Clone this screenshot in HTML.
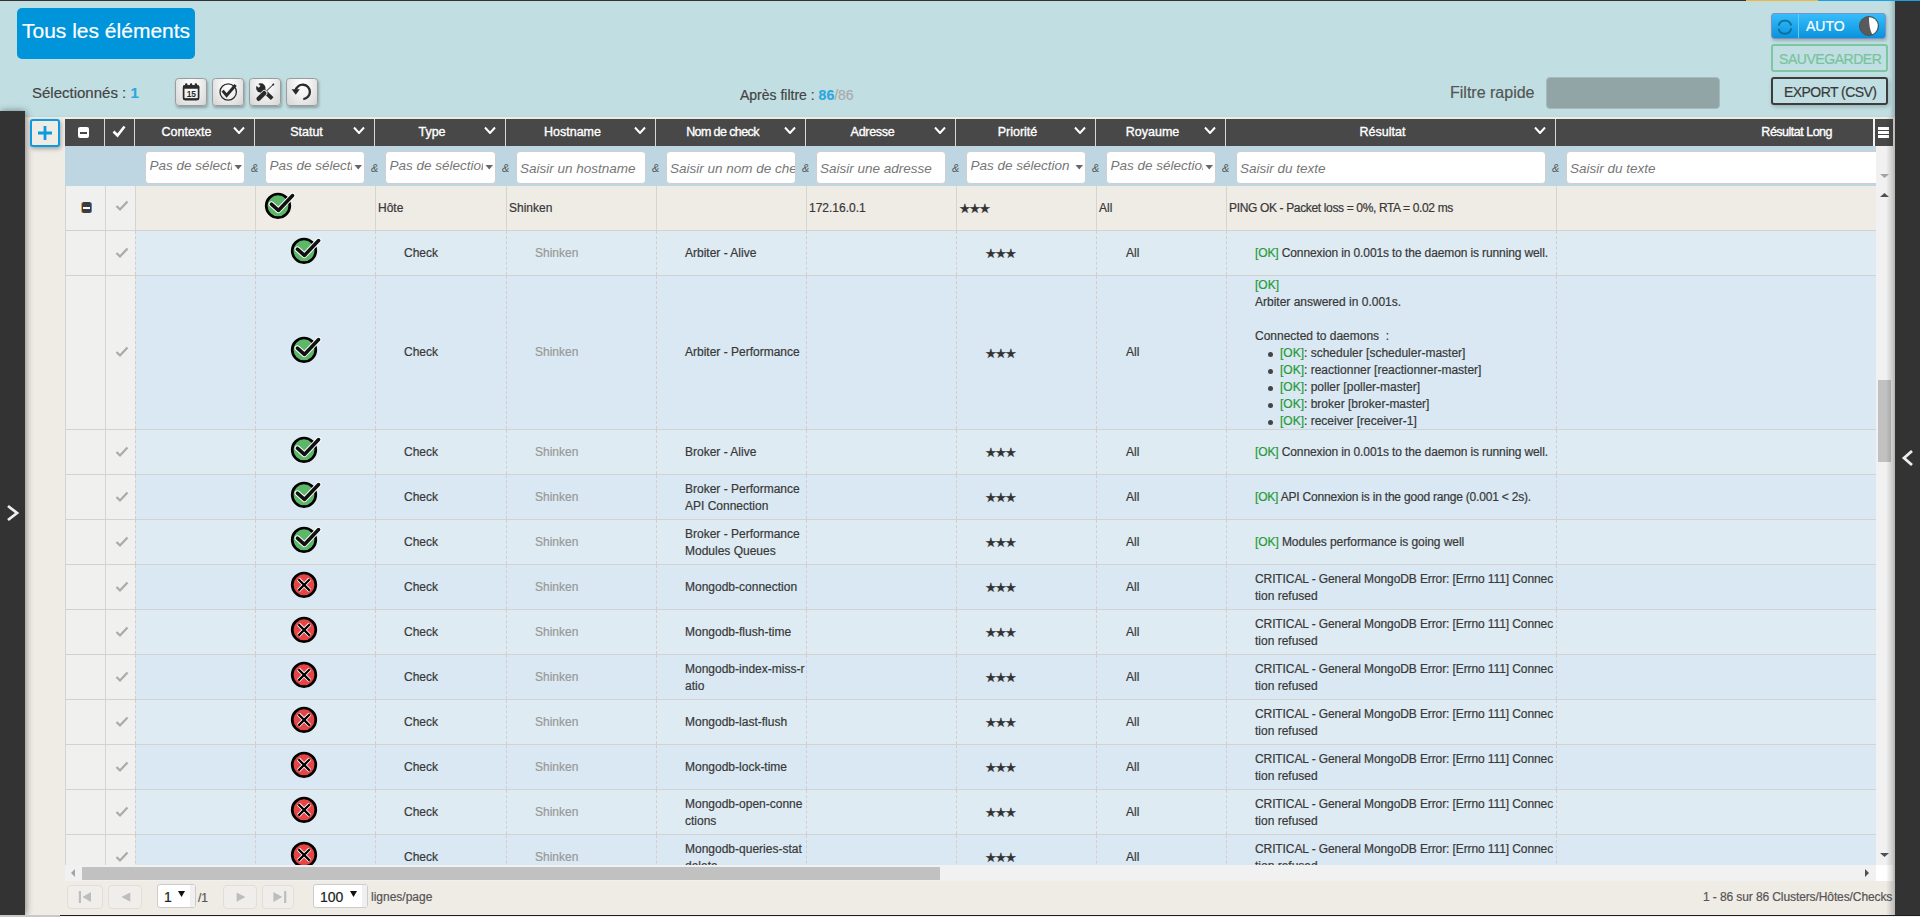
<!DOCTYPE html><html><head><meta charset='utf-8'><style>
*{box-sizing:border-box}
html,body{margin:0;padding:0}
body{width:1920px;height:917px;overflow:hidden;position:relative;background:#efebe5;font-family:"Liberation Sans", sans-serif;color:#444}
.abs{position:absolute}
.t{position:absolute;white-space:nowrap;line-height:1;-webkit-text-stroke:0.2px currentColor}
.hdr{position:absolute;top:119px;height:27px;background:#484848}
.hsep{position:absolute;top:119px;height:27px;width:1px;background:#dcd9d2}
.htxt{position:absolute;top:125.5px;color:#fff;font-weight:normal;-webkit-text-stroke:0.35px #fff;font-size:12.5px;white-space:nowrap;line-height:1}
.chev{position:absolute;top:126px;width:12px;height:8px}
.fin{position:absolute;top:151px;height:33px;background:#fff;border:1px solid #cfcfcf;border-radius:4px;overflow:hidden}
.fph{position:absolute;left:3px;font-style:italic;color:#777;font-size:13.5px;white-space:nowrap;line-height:1}
.amp{position:absolute;top:162.5px;font-style:italic;color:#555;font-size:11px;line-height:1}
.row{position:absolute;left:65px;width:1811px;border-bottom:1px solid #d2d2d2}
.c01{position:absolute;left:0;top:0;bottom:0;width:70px;background:#f0f0ee}
.vl{position:absolute;top:0;bottom:0;width:1px;background:#d4d4d4}
.vd{position:absolute;top:0;bottom:0;width:0;border-left:1px dashed #d6cccc}
.cell{position:absolute;font-size:12px;color:#383838;-webkit-text-stroke:0.2px currentColor;line-height:17px;white-space:nowrap}
.ok{color:#259a35}
.gray{color:#999}
</style></head><body><div class='abs' style='left:0;top:0;width:1895px;height:117px;background:#c1dfe2;box-shadow:inset -5px 0 5px -3px rgba(0,0,0,0.25)'></div><div class='abs' style='left:0;top:0;width:1746px;height:1px;background:#333'></div><div class='abs' style='left:1746px;top:0;width:72px;height:1px;background:#f0b840'></div><div class='abs' style='left:1818px;top:0;width:102px;height:1px;background:#1ba1e2'></div><div class='abs' style='left:1895px;top:1px;width:25px;height:914px;background:#333'></div><div class='abs' style='left:0;top:111px;width:25px;height:804px;background:#333;box-shadow:1px 0 7px rgba(0,0,0,0.45)'></div><svg class='abs' style='left:5px;top:503px' width='16' height='20'><path d='M3 3 L12 10 L3 17' fill='none' stroke='#eee' stroke-width='2.8'/></svg><svg class='abs' style='left:1900px;top:448px' width='16' height='20'><path d='M12 3 L4 10 L12 17' fill='none' stroke='#eee' stroke-width='2.8'/></svg><div class='abs' style='left:17px;top:8px;width:178px;height:51px;background:#0095da;border-radius:5px'></div><div class='t' style='left:22px;top:20px;font-size:21px;color:#fff'>Tous les éléments</div><div class='t' style='left:32px;top:85px;font-size:15px;color:#444'>Sélectionnés : <span style='color:#2ea6e0;font-weight:bold'>1</span></div><div class='abs' style='left:175px;top:78px;width:32px;height:28px;border:1px solid #9c9c9c;border-radius:3.5px;background:radial-gradient(ellipse at 50% 20%,#ffffff 0%,#f2f2f2 40%,#d4d4d4 100%);box-shadow:1px 2px 3px rgba(0,0,0,0.28)'></div><div class='abs' style='left:212px;top:78px;width:32px;height:28px;border:1px solid #9c9c9c;border-radius:3.5px;background:radial-gradient(ellipse at 50% 20%,#ffffff 0%,#f2f2f2 40%,#d4d4d4 100%);box-shadow:1px 2px 3px rgba(0,0,0,0.28)'></div><div class='abs' style='left:249px;top:78px;width:32px;height:28px;border:1px solid #9c9c9c;border-radius:3.5px;background:radial-gradient(ellipse at 50% 20%,#ffffff 0%,#f2f2f2 40%,#d4d4d4 100%);box-shadow:1px 2px 3px rgba(0,0,0,0.28)'></div><div class='abs' style='left:286px;top:78px;width:32px;height:28px;border:1px solid #9c9c9c;border-radius:3.5px;background:radial-gradient(ellipse at 50% 20%,#ffffff 0%,#f2f2f2 40%,#d4d4d4 100%);box-shadow:1px 2px 3px rgba(0,0,0,0.28)'></div><svg class='abs' style='left:175px;top:78px' width='32' height='28'>
<rect x='8.6' y='8' width='15' height='13.6' rx='1.6' fill='none' stroke='#2a2a2a' stroke-width='1.7'/>
<rect x='8' y='7.2' width='16.2' height='3.6' rx='1' fill='#2a2a2a'/>
<circle cx='11.3' cy='6.4' r='1.2' fill='#2a2a2a'/><circle cx='16.1' cy='6.4' r='1.2' fill='#2a2a2a'/><circle cx='20.9' cy='6.4' r='1.2' fill='#2a2a2a'/>
<rect x='8.6' y='20.2' width='15' height='1.8' fill='#2a2a2a'/>
<text x='16.2' y='19.2' font-size='8.4' font-weight='bold' text-anchor='middle' fill='#2a2a2a' font-family='Liberation Sans' letter-spacing='-0.3'>15</text></svg><svg class='abs' style='left:212px;top:78px' width='32' height='28'>
<circle cx='16.2' cy='14' r='8.2' fill='none' stroke='#2a2a2a' stroke-width='1.3'/>
<path d='M10.6 12.6 L14.6 17.4 L23.6 6.9' fill='none' stroke='#2a2a2a' stroke-width='3'/></svg><svg class='abs' style='left:249px;top:78px' width='32' height='28'>
<defs><mask id='wm'><rect width='32' height='28' fill='#fff'/><path d='M11.46 8.02 L7.57 4.13 L5.73 5.97 L9.62 9.86 Z' fill='#000'/></mask></defs>
<path d='M12 10 L23.2 20.6' stroke='#2a2a2a' stroke-width='4' stroke-linecap='butt'/>
<circle cx='11.8' cy='10' r='4.7' fill='#2a2a2a' mask='url(#wm)'/>
<path d='M24.4 6.4 L15.6 14.8 L9.4 21' stroke='#e4e4e4' stroke-width='1.6' fill='none'/>
<path d='M24.4 6.4 L15.8 14.6' stroke='#2a2a2a' stroke-width='1' fill='none'/>
<path d='M15.4 15 L9.6 20.8' stroke='#e4e4e4' stroke-width='6' stroke-linecap='round'/>
<path d='M15.2 15.2 L9.6 20.8' stroke='#2a2a2a' stroke-width='4.4' stroke-linecap='round'/>
<circle cx='24.3' cy='6.5' r='1' fill='#2a2a2a'/></svg><svg class='abs' style='left:286px;top:78px' width='32' height='28'>
<path d='M9.6 12.6 A7.2 7.2 0 1 1 17.3 21.1' fill='none' stroke='#2a2a2a' stroke-width='2.3'/>
<path d='M5.6 11.2 L13.8 11.2 L9.8 16.8 Z' fill='#2a2a2a'/></svg><div class='t' style='left:740px;top:88px;font-size:14px;color:#444'>Après filtre : <span style='color:#2ea6e0;font-weight:bold'>86</span><span style='color:#aaa'>/86</span></div><div class='t' style='left:1450px;top:85px;font-size:16px;color:#555'>Filtre rapide</div><div class='abs' style='left:1546px;top:77px;width:174px;height:32px;background:#91a4a6;border:1px solid #a9b8ba;border-radius:4px'></div><div class='abs' style='left:1771px;top:13px;width:115px;height:26px;border:1px solid #7f8fc8;border-radius:3px;background:linear-gradient(#36bdfc,#0993dc);box-shadow:1px 2px 3px rgba(0,0,0,0.2)'></div><div class='abs' style='left:1798px;top:14px;width:1px;height:24px;background:#62cdfb'></div><svg class='abs' style='left:1775px;top:17px' width='20' height='20'>
<path d='M3.6 8.6 A6.5 6.5 0 0 1 16.2 8.4' fill='none' stroke='#0f6f98' stroke-width='1.9'/>
<path d='M16.2 11.4 A6.5 6.5 0 0 1 3.5 11.8' fill='none' stroke='#0f6f98' stroke-width='1.9'/></svg><div class='t' style='left:1806px;top:19px;font-size:14px;color:#fff'>AUTO</div><svg class='abs' style='left:1858px;top:15px' width='22' height='22'>
<circle cx='11' cy='11' r='9.6' fill='#5a5a5a' stroke='#4a4a4a' stroke-width='0.8'/>
<path d='M11 2.2 A8.8 8.8 0 0 1 14.2 19.2 Q10.8 13 11 2.2 Z' fill='#fff'/></svg><div class='abs' style='left:1771px;top:44px;width:117px;height:28px;border:2px solid #7cc6a2;border-radius:3px'></div><div class='t' style='left:1779px;top:52px;font-size:14px;letter-spacing:-0.45px;color:#76c39d'>SAUVEGARDER</div><div class='abs' style='left:1771px;top:77px;width:117px;height:28px;border:2px solid #3d3d3d;border-radius:3px;box-shadow:1px 2px 4px rgba(0,0,0,0.2)'></div><div class='t' style='left:1784px;top:85px;font-size:14px;letter-spacing:-0.55px;color:#3a3a3a'>EXPORT (CSV)</div><div class='abs' style='left:30px;top:119px;width:30px;height:28px;border:2px solid #0a9be0;border-radius:3px;background:#efebe5;box-shadow:1px 2px 4px rgba(0,0,0,0.3)'></div><svg class='abs' style='left:30px;top:119px' width='30' height='28'><path d='M15 7v14M8 14h14' stroke='#0a9be0' stroke-width='2.8'/></svg><div class='hdr' style='left:65px;width:1808px'></div><div class='abs' style='left:1873px;top:119px;width:2px;height:27px;background:#f4f4f4'></div><div class='abs' style='left:1875px;top:119px;width:18px;height:27px;background:#484848'></div><div class='hsep' style='left:104px'></div><div class='hsep' style='left:134px'></div><div class='hsep' style='left:254px'></div><div class='hsep' style='left:374px'></div><div class='hsep' style='left:505px'></div><div class='hsep' style='left:655px'></div><div class='hsep' style='left:805px'></div><div class='hsep' style='left:955px'></div><div class='hsep' style='left:1095px'></div><div class='hsep' style='left:1225px'></div><div class='hsep' style='left:1555px'></div><div class='abs' style='left:78px;top:127px;width:11px;height:11px;background:#fff;border-radius:2px'></div><div class='abs' style='left:80px;top:132px;width:7px;height:1.5px;background:#484848'></div><svg class='abs' style='left:110px;top:123px' width='18' height='16'><path d='M3.5 8.5 L7.5 12.5 L14.5 3.5' fill='none' stroke='#fff' stroke-width='2.6'/></svg><div class='htxt' style='left:135px;width:103px;text-align:center;letter-spacing:0px'>Contexte</div><svg class='chev' style='left:233px' width='12' height='9'><path d='M1 1.5 L6 7 L11 1.5' fill='none' stroke='#fff' stroke-width='2'/></svg><div class='htxt' style='left:255px;width:103px;text-align:center;letter-spacing:0px'>Statut</div><svg class='chev' style='left:353px' width='12' height='9'><path d='M1 1.5 L6 7 L11 1.5' fill='none' stroke='#fff' stroke-width='2'/></svg><div class='htxt' style='left:375px;width:114px;text-align:center;letter-spacing:0px'>Type</div><svg class='chev' style='left:484px' width='12' height='9'><path d='M1 1.5 L6 7 L11 1.5' fill='none' stroke='#fff' stroke-width='2'/></svg><div class='htxt' style='left:506px;width:133px;text-align:center;letter-spacing:0px'>Hostname</div><svg class='chev' style='left:634px' width='12' height='9'><path d='M1 1.5 L6 7 L11 1.5' fill='none' stroke='#fff' stroke-width='2'/></svg><div class='htxt' style='left:656px;width:133px;text-align:center;letter-spacing:-0.6px'>Nom de check</div><svg class='chev' style='left:784px' width='12' height='9'><path d='M1 1.5 L6 7 L11 1.5' fill='none' stroke='#fff' stroke-width='2'/></svg><div class='htxt' style='left:806px;width:133px;text-align:center;letter-spacing:-0.3px'>Adresse</div><svg class='chev' style='left:934px' width='12' height='9'><path d='M1 1.5 L6 7 L11 1.5' fill='none' stroke='#fff' stroke-width='2'/></svg><div class='htxt' style='left:956px;width:123px;text-align:center;letter-spacing:0px'>Priorité</div><svg class='chev' style='left:1074px' width='12' height='9'><path d='M1 1.5 L6 7 L11 1.5' fill='none' stroke='#fff' stroke-width='2'/></svg><div class='htxt' style='left:1096px;width:113px;text-align:center;letter-spacing:0px'>Royaume</div><svg class='chev' style='left:1204px' width='12' height='9'><path d='M1 1.5 L6 7 L11 1.5' fill='none' stroke='#fff' stroke-width='2'/></svg><div class='htxt' style='left:1226px;width:313px;text-align:center;letter-spacing:0px'>Résultat</div><svg class='chev' style='left:1534px' width='12' height='9'><path d='M1 1.5 L6 7 L11 1.5' fill='none' stroke='#fff' stroke-width='2'/></svg><div class='htxt' style='left:1556px;width:317px;text-align:right;padding-right:41px;letter-spacing:-0.5px'>Résultat Long</div><div class='abs' style='left:1878px;top:127px;width:11px;height:3px;background:#fff'></div><div class='abs' style='left:1878px;top:131px;width:11px;height:3px;background:#fff'></div><div class='abs' style='left:1878px;top:135px;width:11px;height:3px;background:#fff'></div><div class='abs' style='left:65px;top:146px;width:1811px;height:40px;background:#bdd6e2'></div><div class='abs' style='left:1876px;top:146px;width:17px;height:719px;background:#f1f1f1'></div><div class='abs' style='left:1876px;top:865px;width:17px;height:16px;background:#fff'></div><div class='abs' style='left:0;top:0;width:1876px;height:200px;overflow:hidden'><div class='fin' style='left:145px;width:100px'><div class='fph' style='top:6.5px;left:3.5px;width:82px;overflow:hidden'>Pas de sélecti</div><svg class='abs' style='right:1px;top:12.5px' width='9' height='6'><path d='M0.5 0h7.5l-3.75 4.6z' fill='#666'/></svg></div><div class='amp' style='left:251px'>&amp;</div><div class='fin' style='left:265px;width:100px'><div class='fph' style='top:6.5px;left:3.5px;width:82px;overflow:hidden'>Pas de sélecti</div><svg class='abs' style='right:1px;top:12.5px' width='9' height='6'><path d='M0.5 0h7.5l-3.75 4.6z' fill='#666'/></svg></div><div class='amp' style='left:371px'>&amp;</div><div class='fin' style='left:385px;width:111px'><div class='fph' style='top:6.5px;left:3.5px;width:93px;overflow:hidden'>Pas de sélection</div><svg class='abs' style='right:1px;top:12.5px' width='9' height='6'><path d='M0.5 0h7.5l-3.75 4.6z' fill='#666'/></svg></div><div class='amp' style='left:502px'>&amp;</div><div class='fin' style='left:516px;width:130px'><div class='fph' style='top:10px'>Saisir un hostname</div></div><div class='amp' style='left:652px'>&amp;</div><div class='fin' style='left:666px;width:130px'><div class='fph' style='top:10px'>Saisir un nom de check</div></div><div class='amp' style='left:802px'>&amp;</div><div class='fin' style='left:816px;width:130px'><div class='fph' style='top:10px'>Saisir une adresse</div></div><div class='amp' style='left:952px'>&amp;</div><div class='fin' style='left:966px;width:120px'><div class='fph' style='top:6.5px;left:3.5px;width:102px;overflow:hidden'>Pas de sélection</div><svg class='abs' style='right:1px;top:12.5px' width='9' height='6'><path d='M0.5 0h7.5l-3.75 4.6z' fill='#666'/></svg></div><div class='amp' style='left:1092px'>&amp;</div><div class='fin' style='left:1106px;width:110px'><div class='fph' style='top:6.5px;left:3.5px;width:92px;overflow:hidden'>Pas de sélection</div><svg class='abs' style='right:1px;top:12.5px' width='9' height='6'><path d='M0.5 0h7.5l-3.75 4.6z' fill='#666'/></svg></div><div class='amp' style='left:1222px'>&amp;</div><div class='fin' style='left:1236px;width:310px'><div class='fph' style='top:10px'>Saisir du texte</div></div><div class='amp' style='left:1552px'>&amp;</div><div class='fin' style='left:1566px;width:334px'><div class='fph' style='top:10px'>Saisir du texte</div></div></div><svg class='abs' style='left:1879px;top:174px' width='12' height='6'><path d='M1 0h9l-4.5 4z' fill='#a3a3a3'/></svg><svg class='abs' style='left:1879px;top:192px' width='12' height='6'><path d='M1 5h9l-4.5 -4z' fill='#505050'/></svg><svg class='abs' style='left:1879px;top:853px' width='12' height='6'><path d='M1 0h9l-4.5 4z' fill='#505050'/></svg><div class='abs' style='left:1878px;top:380px;width:13px;height:82px;background:#c1c1c1'></div><div class='row' style='top:186px;height:45px;background:#efebe5'><div class='c01'></div><div class='vl' style='left:40px'></div><div class='vl' style='left:70px'></div><div class='vl' style='left:190px'></div><div class='vl' style='left:310px'></div><div class='vl' style='left:441px'></div><div class='vl' style='left:591px'></div><div class='vl' style='left:741px'></div><div class='vl' style='left:891px'></div><div class='vl' style='left:1031px'></div><div class='vl' style='left:1161px'></div><div class='vl' style='left:1491px'></div><div class='vl' style='left:0'></div></div><div class='abs' style='left:81px;top:202px;width:11px;height:11px;background:#3c3c3c;border-radius:2.5px;border-left:1px solid #e0a040;border-right:1px solid #3a8ad0'></div><div class='abs' style='left:83px;top:206.5px;width:7px;height:2px;background:#fff'></div><svg class='abs' style='left:115px;top:199px' width='14' height='13'><path d='M1.5 7 L5 10.5 L12.5 2.5' fill='none' stroke='#aaa' stroke-width='2.2'/></svg><svg class='abs' style='left:263px;top:191px' width='34' height='32'><circle cx='15' cy='14.8' r='11.8' fill='#5cb868' stroke='#000' stroke-width='2.7'/><path d='M8.4 13.2 L15.4 19.4 L29.6 4.6' fill='none' stroke='#fff' stroke-width='5.6' stroke-linecap='round' stroke-linejoin='round'/><path d='M8.4 13.2 L15.4 19.4 L29.6 4.6' fill='none' stroke='#111' stroke-width='3.6' stroke-linecap='round' stroke-linejoin='round'/></svg><div class='cell ' style='left:378px;top:199.5px;'>Hôte</div><div class='cell ' style='left:509px;top:199.5px;'>Shinken</div><div class='cell ' style='left:809px;top:199.5px;'>172.16.0.1</div><div class='t' style='left:959px;top:203px;font-size:12.5px;color:#333;letter-spacing:-2px'>★★★</div><div class='cell ' style='left:1099px;top:199.5px;'>All</div><div class='cell ' style='left:1229px;top:199.5px;letter-spacing:-0.35px'>PING OK - Packet loss = 0%, RTA = 0.02 ms</div><div class='abs' style='left:0;top:0;width:1920px;height:865px;overflow:hidden'><div class='row' style='top:231px;height:45px;background:#dfebf3'><div class='c01'></div><div class='vl' style='left:0'></div><div class='vl' style='left:40px'></div><div class='vd' style='left:70px'></div><div class='vd' style='left:190px'></div><div class='vd' style='left:310px'></div><div class='vd' style='left:441px'></div><div class='vd' style='left:591px'></div><div class='vd' style='left:741px'></div><div class='vd' style='left:891px'></div><div class='vd' style='left:1031px'></div><div class='vd' style='left:1161px'></div><div class='vd' style='left:1491px'></div></div><svg class='abs' style='left:115px;top:246px' width='14' height='13'><path d='M1.5 7 L5 10.5 L12.5 2.5' fill='none' stroke='#aaa' stroke-width='2.2'/></svg><svg class='abs' style='left:289px;top:236px' width='34' height='32'><circle cx='15' cy='14.8' r='11.8' fill='#5cb868' stroke='#000' stroke-width='2.7'/><path d='M8.4 13.2 L15.4 19.4 L29.6 4.6' fill='none' stroke='#fff' stroke-width='5.6' stroke-linecap='round' stroke-linejoin='round'/><path d='M8.4 13.2 L15.4 19.4 L29.6 4.6' fill='none' stroke='#111' stroke-width='3.6' stroke-linecap='round' stroke-linejoin='round'/></svg><div class='cell ' style='left:404px;top:244.5px;'>Check</div><div class='cell gray' style='left:535px;top:244.5px;'>Shinken</div><div class='cell' style='left:685px;top:244.5px'>Arbiter - Alive</div><div class='t' style='left:985px;top:248px;font-size:12.5px;color:#333;letter-spacing:-2px'>★★★</div><div class='cell ' style='left:1126px;top:244.5px;'>All</div><div class='cell' style='left:1255px;top:244.5px'><div style='position:relative;height:17px'><span style='letter-spacing:-0.12px'><span class='ok'>[OK]</span> Connexion in 0.001s to the daemon is running well.</span></div></div><div class='row' style='top:276px;height:154px;background:#d9e8f2'><div class='c01'></div><div class='vl' style='left:0'></div><div class='vl' style='left:40px'></div><div class='vd' style='left:70px'></div><div class='vd' style='left:190px'></div><div class='vd' style='left:310px'></div><div class='vd' style='left:441px'></div><div class='vd' style='left:591px'></div><div class='vd' style='left:741px'></div><div class='vd' style='left:891px'></div><div class='vd' style='left:1031px'></div><div class='vd' style='left:1161px'></div><div class='vd' style='left:1491px'></div></div><svg class='abs' style='left:115px;top:345px' width='14' height='13'><path d='M1.5 7 L5 10.5 L12.5 2.5' fill='none' stroke='#aaa' stroke-width='2.2'/></svg><svg class='abs' style='left:289px;top:335px' width='34' height='32'><circle cx='15' cy='14.8' r='11.8' fill='#5cb868' stroke='#000' stroke-width='2.7'/><path d='M8.4 13.2 L15.4 19.4 L29.6 4.6' fill='none' stroke='#fff' stroke-width='5.6' stroke-linecap='round' stroke-linejoin='round'/><path d='M8.4 13.2 L15.4 19.4 L29.6 4.6' fill='none' stroke='#111' stroke-width='3.6' stroke-linecap='round' stroke-linejoin='round'/></svg><div class='cell ' style='left:404px;top:344.0px;'>Check</div><div class='cell gray' style='left:535px;top:344.0px;'>Shinken</div><div class='cell' style='left:685px;top:344.0px'>Arbiter - Performance</div><div class='t' style='left:985px;top:348px;font-size:12.5px;color:#333;letter-spacing:-2px'>★★★</div><div class='cell ' style='left:1126px;top:344.0px;'>All</div><div class='cell' style='left:1255px;top:277.0px'><div style='position:relative;height:17px'><span class='ok'>[OK]</span></div><div style='position:relative;height:17px'>Arbiter answered in 0.001s.</div><div style='position:relative;height:17px'>&nbsp;</div><div style='position:relative;height:17px'>Connected to daemons&nbsp; :</div><div style='position:relative;height:17px'><span style='position:absolute;left:13px;top:6.5px;width:5px;height:5px;border-radius:50%;background:#444'></span><span style='position:absolute;left:25px'><span class='ok'>[OK]</span>: scheduler [scheduler-master]</span></div><div style='position:relative;height:17px'><span style='position:absolute;left:13px;top:6.5px;width:5px;height:5px;border-radius:50%;background:#444'></span><span style='position:absolute;left:25px'><span class='ok'>[OK]</span>: reactionner [reactionner-master]</span></div><div style='position:relative;height:17px'><span style='position:absolute;left:13px;top:6.5px;width:5px;height:5px;border-radius:50%;background:#444'></span><span style='position:absolute;left:25px'><span class='ok'>[OK]</span>: poller [poller-master]</span></div><div style='position:relative;height:17px'><span style='position:absolute;left:13px;top:6.5px;width:5px;height:5px;border-radius:50%;background:#444'></span><span style='position:absolute;left:25px'><span class='ok'>[OK]</span>: broker [broker-master]</span></div><div style='position:relative;height:17px'><span style='position:absolute;left:13px;top:6.5px;width:5px;height:5px;border-radius:50%;background:#444'></span><span style='position:absolute;left:25px'><span class='ok'>[OK]</span>: receiver [receiver-1]</span></div></div><div class='row' style='top:430px;height:45px;background:#dfebf3'><div class='c01'></div><div class='vl' style='left:0'></div><div class='vl' style='left:40px'></div><div class='vd' style='left:70px'></div><div class='vd' style='left:190px'></div><div class='vd' style='left:310px'></div><div class='vd' style='left:441px'></div><div class='vd' style='left:591px'></div><div class='vd' style='left:741px'></div><div class='vd' style='left:891px'></div><div class='vd' style='left:1031px'></div><div class='vd' style='left:1161px'></div><div class='vd' style='left:1491px'></div></div><svg class='abs' style='left:115px;top:445px' width='14' height='13'><path d='M1.5 7 L5 10.5 L12.5 2.5' fill='none' stroke='#aaa' stroke-width='2.2'/></svg><svg class='abs' style='left:289px;top:435px' width='34' height='32'><circle cx='15' cy='14.8' r='11.8' fill='#5cb868' stroke='#000' stroke-width='2.7'/><path d='M8.4 13.2 L15.4 19.4 L29.6 4.6' fill='none' stroke='#fff' stroke-width='5.6' stroke-linecap='round' stroke-linejoin='round'/><path d='M8.4 13.2 L15.4 19.4 L29.6 4.6' fill='none' stroke='#111' stroke-width='3.6' stroke-linecap='round' stroke-linejoin='round'/></svg><div class='cell ' style='left:404px;top:443.5px;'>Check</div><div class='cell gray' style='left:535px;top:443.5px;'>Shinken</div><div class='cell' style='left:685px;top:443.5px'>Broker - Alive</div><div class='t' style='left:985px;top:447px;font-size:12.5px;color:#333;letter-spacing:-2px'>★★★</div><div class='cell ' style='left:1126px;top:443.5px;'>All</div><div class='cell' style='left:1255px;top:443.5px'><div style='position:relative;height:17px'><span style='letter-spacing:-0.12px'><span class='ok'>[OK]</span> Connexion in 0.001s to the daemon is running well.</span></div></div><div class='row' style='top:475px;height:45px;background:#d9e8f2'><div class='c01'></div><div class='vl' style='left:0'></div><div class='vl' style='left:40px'></div><div class='vd' style='left:70px'></div><div class='vd' style='left:190px'></div><div class='vd' style='left:310px'></div><div class='vd' style='left:441px'></div><div class='vd' style='left:591px'></div><div class='vd' style='left:741px'></div><div class='vd' style='left:891px'></div><div class='vd' style='left:1031px'></div><div class='vd' style='left:1161px'></div><div class='vd' style='left:1491px'></div></div><svg class='abs' style='left:115px;top:490px' width='14' height='13'><path d='M1.5 7 L5 10.5 L12.5 2.5' fill='none' stroke='#aaa' stroke-width='2.2'/></svg><svg class='abs' style='left:289px;top:480px' width='34' height='32'><circle cx='15' cy='14.8' r='11.8' fill='#5cb868' stroke='#000' stroke-width='2.7'/><path d='M8.4 13.2 L15.4 19.4 L29.6 4.6' fill='none' stroke='#fff' stroke-width='5.6' stroke-linecap='round' stroke-linejoin='round'/><path d='M8.4 13.2 L15.4 19.4 L29.6 4.6' fill='none' stroke='#111' stroke-width='3.6' stroke-linecap='round' stroke-linejoin='round'/></svg><div class='cell ' style='left:404px;top:488.5px;'>Check</div><div class='cell gray' style='left:535px;top:488.5px;'>Shinken</div><div class='cell' style='left:685px;top:481.0px'>Broker - Performance<br>API Connection</div><div class='t' style='left:985px;top:492px;font-size:12.5px;color:#333;letter-spacing:-2px'>★★★</div><div class='cell ' style='left:1126px;top:488.5px;'>All</div><div class='cell' style='left:1255px;top:488.5px'><div style='position:relative;height:17px'><span style='letter-spacing:-0.2px'><span class='ok'>[OK]</span> API Connexion is in the good range (0.001 &lt; 2s).</span></div></div><div class='row' style='top:520px;height:45px;background:#dfebf3'><div class='c01'></div><div class='vl' style='left:0'></div><div class='vl' style='left:40px'></div><div class='vd' style='left:70px'></div><div class='vd' style='left:190px'></div><div class='vd' style='left:310px'></div><div class='vd' style='left:441px'></div><div class='vd' style='left:591px'></div><div class='vd' style='left:741px'></div><div class='vd' style='left:891px'></div><div class='vd' style='left:1031px'></div><div class='vd' style='left:1161px'></div><div class='vd' style='left:1491px'></div></div><svg class='abs' style='left:115px;top:535px' width='14' height='13'><path d='M1.5 7 L5 10.5 L12.5 2.5' fill='none' stroke='#aaa' stroke-width='2.2'/></svg><svg class='abs' style='left:289px;top:525px' width='34' height='32'><circle cx='15' cy='14.8' r='11.8' fill='#5cb868' stroke='#000' stroke-width='2.7'/><path d='M8.4 13.2 L15.4 19.4 L29.6 4.6' fill='none' stroke='#fff' stroke-width='5.6' stroke-linecap='round' stroke-linejoin='round'/><path d='M8.4 13.2 L15.4 19.4 L29.6 4.6' fill='none' stroke='#111' stroke-width='3.6' stroke-linecap='round' stroke-linejoin='round'/></svg><div class='cell ' style='left:404px;top:533.5px;'>Check</div><div class='cell gray' style='left:535px;top:533.5px;'>Shinken</div><div class='cell' style='left:685px;top:526.0px'>Broker - Performance<br>Modules Queues</div><div class='t' style='left:985px;top:537px;font-size:12.5px;color:#333;letter-spacing:-2px'>★★★</div><div class='cell ' style='left:1126px;top:533.5px;'>All</div><div class='cell' style='left:1255px;top:533.5px'><div style='position:relative;height:17px'><span style='letter-spacing:-0.08px'><span class='ok'>[OK]</span> Modules performance is going well</span></div></div><div class='row' style='top:565px;height:45px;background:#d9e8f2'><div class='c01'></div><div class='vl' style='left:0'></div><div class='vl' style='left:40px'></div><div class='vd' style='left:70px'></div><div class='vd' style='left:190px'></div><div class='vd' style='left:310px'></div><div class='vd' style='left:441px'></div><div class='vd' style='left:591px'></div><div class='vd' style='left:741px'></div><div class='vd' style='left:891px'></div><div class='vd' style='left:1031px'></div><div class='vd' style='left:1161px'></div><div class='vd' style='left:1491px'></div></div><svg class='abs' style='left:115px;top:580px' width='14' height='13'><path d='M1.5 7 L5 10.5 L12.5 2.5' fill='none' stroke='#aaa' stroke-width='2.2'/></svg><svg class='abs' style='left:289px;top:570px' width='30' height='30'><circle cx='15' cy='14.8' r='11.8' fill='#e64545' stroke='#000' stroke-width='2.7'/><path d='M9.4 9.2 L20.8 20.6 M20.8 9.2 L9.4 20.6' fill='none' stroke='#fff' stroke-width='4'/><path d='M9.4 9.2 L20.8 20.6 M20.8 9.2 L9.4 20.6' fill='none' stroke='#000' stroke-width='2.3'/></svg><div class='cell ' style='left:404px;top:578.5px;'>Check</div><div class='cell gray' style='left:535px;top:578.5px;'>Shinken</div><div class='cell' style='left:685px;top:578.5px'>Mongodb-connection</div><div class='t' style='left:985px;top:582px;font-size:12.5px;color:#333;letter-spacing:-2px'>★★★</div><div class='cell ' style='left:1126px;top:578.5px;'>All</div><div class='cell' style='left:1255px;top:571.0px'><div style='position:relative;height:17px'><span style='letter-spacing:-0.1px'>CRITICAL - General MongoDB Error: [Errno 111] Connec</span></div><div style='position:relative;height:17px'>tion refused</div></div><div class='row' style='top:610px;height:45px;background:#dfebf3'><div class='c01'></div><div class='vl' style='left:0'></div><div class='vl' style='left:40px'></div><div class='vd' style='left:70px'></div><div class='vd' style='left:190px'></div><div class='vd' style='left:310px'></div><div class='vd' style='left:441px'></div><div class='vd' style='left:591px'></div><div class='vd' style='left:741px'></div><div class='vd' style='left:891px'></div><div class='vd' style='left:1031px'></div><div class='vd' style='left:1161px'></div><div class='vd' style='left:1491px'></div></div><svg class='abs' style='left:115px;top:625px' width='14' height='13'><path d='M1.5 7 L5 10.5 L12.5 2.5' fill='none' stroke='#aaa' stroke-width='2.2'/></svg><svg class='abs' style='left:289px;top:615px' width='30' height='30'><circle cx='15' cy='14.8' r='11.8' fill='#e64545' stroke='#000' stroke-width='2.7'/><path d='M9.4 9.2 L20.8 20.6 M20.8 9.2 L9.4 20.6' fill='none' stroke='#fff' stroke-width='4'/><path d='M9.4 9.2 L20.8 20.6 M20.8 9.2 L9.4 20.6' fill='none' stroke='#000' stroke-width='2.3'/></svg><div class='cell ' style='left:404px;top:623.5px;'>Check</div><div class='cell gray' style='left:535px;top:623.5px;'>Shinken</div><div class='cell' style='left:685px;top:623.5px'>Mongodb-flush-time</div><div class='t' style='left:985px;top:627px;font-size:12.5px;color:#333;letter-spacing:-2px'>★★★</div><div class='cell ' style='left:1126px;top:623.5px;'>All</div><div class='cell' style='left:1255px;top:616.0px'><div style='position:relative;height:17px'><span style='letter-spacing:-0.1px'>CRITICAL - General MongoDB Error: [Errno 111] Connec</span></div><div style='position:relative;height:17px'>tion refused</div></div><div class='row' style='top:655px;height:45px;background:#d9e8f2'><div class='c01'></div><div class='vl' style='left:0'></div><div class='vl' style='left:40px'></div><div class='vd' style='left:70px'></div><div class='vd' style='left:190px'></div><div class='vd' style='left:310px'></div><div class='vd' style='left:441px'></div><div class='vd' style='left:591px'></div><div class='vd' style='left:741px'></div><div class='vd' style='left:891px'></div><div class='vd' style='left:1031px'></div><div class='vd' style='left:1161px'></div><div class='vd' style='left:1491px'></div></div><svg class='abs' style='left:115px;top:670px' width='14' height='13'><path d='M1.5 7 L5 10.5 L12.5 2.5' fill='none' stroke='#aaa' stroke-width='2.2'/></svg><svg class='abs' style='left:289px;top:660px' width='30' height='30'><circle cx='15' cy='14.8' r='11.8' fill='#e64545' stroke='#000' stroke-width='2.7'/><path d='M9.4 9.2 L20.8 20.6 M20.8 9.2 L9.4 20.6' fill='none' stroke='#fff' stroke-width='4'/><path d='M9.4 9.2 L20.8 20.6 M20.8 9.2 L9.4 20.6' fill='none' stroke='#000' stroke-width='2.3'/></svg><div class='cell ' style='left:404px;top:668.5px;'>Check</div><div class='cell gray' style='left:535px;top:668.5px;'>Shinken</div><div class='cell' style='left:685px;top:661.0px'>Mongodb-index-miss-r<br>atio</div><div class='t' style='left:985px;top:672px;font-size:12.5px;color:#333;letter-spacing:-2px'>★★★</div><div class='cell ' style='left:1126px;top:668.5px;'>All</div><div class='cell' style='left:1255px;top:661.0px'><div style='position:relative;height:17px'><span style='letter-spacing:-0.1px'>CRITICAL - General MongoDB Error: [Errno 111] Connec</span></div><div style='position:relative;height:17px'>tion refused</div></div><div class='row' style='top:700px;height:45px;background:#dfebf3'><div class='c01'></div><div class='vl' style='left:0'></div><div class='vl' style='left:40px'></div><div class='vd' style='left:70px'></div><div class='vd' style='left:190px'></div><div class='vd' style='left:310px'></div><div class='vd' style='left:441px'></div><div class='vd' style='left:591px'></div><div class='vd' style='left:741px'></div><div class='vd' style='left:891px'></div><div class='vd' style='left:1031px'></div><div class='vd' style='left:1161px'></div><div class='vd' style='left:1491px'></div></div><svg class='abs' style='left:115px;top:715px' width='14' height='13'><path d='M1.5 7 L5 10.5 L12.5 2.5' fill='none' stroke='#aaa' stroke-width='2.2'/></svg><svg class='abs' style='left:289px;top:705px' width='30' height='30'><circle cx='15' cy='14.8' r='11.8' fill='#e64545' stroke='#000' stroke-width='2.7'/><path d='M9.4 9.2 L20.8 20.6 M20.8 9.2 L9.4 20.6' fill='none' stroke='#fff' stroke-width='4'/><path d='M9.4 9.2 L20.8 20.6 M20.8 9.2 L9.4 20.6' fill='none' stroke='#000' stroke-width='2.3'/></svg><div class='cell ' style='left:404px;top:713.5px;'>Check</div><div class='cell gray' style='left:535px;top:713.5px;'>Shinken</div><div class='cell' style='left:685px;top:713.5px'>Mongodb-last-flush</div><div class='t' style='left:985px;top:717px;font-size:12.5px;color:#333;letter-spacing:-2px'>★★★</div><div class='cell ' style='left:1126px;top:713.5px;'>All</div><div class='cell' style='left:1255px;top:706.0px'><div style='position:relative;height:17px'><span style='letter-spacing:-0.1px'>CRITICAL - General MongoDB Error: [Errno 111] Connec</span></div><div style='position:relative;height:17px'>tion refused</div></div><div class='row' style='top:745px;height:45px;background:#d9e8f2'><div class='c01'></div><div class='vl' style='left:0'></div><div class='vl' style='left:40px'></div><div class='vd' style='left:70px'></div><div class='vd' style='left:190px'></div><div class='vd' style='left:310px'></div><div class='vd' style='left:441px'></div><div class='vd' style='left:591px'></div><div class='vd' style='left:741px'></div><div class='vd' style='left:891px'></div><div class='vd' style='left:1031px'></div><div class='vd' style='left:1161px'></div><div class='vd' style='left:1491px'></div></div><svg class='abs' style='left:115px;top:760px' width='14' height='13'><path d='M1.5 7 L5 10.5 L12.5 2.5' fill='none' stroke='#aaa' stroke-width='2.2'/></svg><svg class='abs' style='left:289px;top:750px' width='30' height='30'><circle cx='15' cy='14.8' r='11.8' fill='#e64545' stroke='#000' stroke-width='2.7'/><path d='M9.4 9.2 L20.8 20.6 M20.8 9.2 L9.4 20.6' fill='none' stroke='#fff' stroke-width='4'/><path d='M9.4 9.2 L20.8 20.6 M20.8 9.2 L9.4 20.6' fill='none' stroke='#000' stroke-width='2.3'/></svg><div class='cell ' style='left:404px;top:758.5px;'>Check</div><div class='cell gray' style='left:535px;top:758.5px;'>Shinken</div><div class='cell' style='left:685px;top:758.5px'>Mongodb-lock-time</div><div class='t' style='left:985px;top:762px;font-size:12.5px;color:#333;letter-spacing:-2px'>★★★</div><div class='cell ' style='left:1126px;top:758.5px;'>All</div><div class='cell' style='left:1255px;top:751.0px'><div style='position:relative;height:17px'><span style='letter-spacing:-0.1px'>CRITICAL - General MongoDB Error: [Errno 111] Connec</span></div><div style='position:relative;height:17px'>tion refused</div></div><div class='row' style='top:790px;height:45px;background:#dfebf3'><div class='c01'></div><div class='vl' style='left:0'></div><div class='vl' style='left:40px'></div><div class='vd' style='left:70px'></div><div class='vd' style='left:190px'></div><div class='vd' style='left:310px'></div><div class='vd' style='left:441px'></div><div class='vd' style='left:591px'></div><div class='vd' style='left:741px'></div><div class='vd' style='left:891px'></div><div class='vd' style='left:1031px'></div><div class='vd' style='left:1161px'></div><div class='vd' style='left:1491px'></div></div><svg class='abs' style='left:115px;top:805px' width='14' height='13'><path d='M1.5 7 L5 10.5 L12.5 2.5' fill='none' stroke='#aaa' stroke-width='2.2'/></svg><svg class='abs' style='left:289px;top:795px' width='30' height='30'><circle cx='15' cy='14.8' r='11.8' fill='#e64545' stroke='#000' stroke-width='2.7'/><path d='M9.4 9.2 L20.8 20.6 M20.8 9.2 L9.4 20.6' fill='none' stroke='#fff' stroke-width='4'/><path d='M9.4 9.2 L20.8 20.6 M20.8 9.2 L9.4 20.6' fill='none' stroke='#000' stroke-width='2.3'/></svg><div class='cell ' style='left:404px;top:803.5px;'>Check</div><div class='cell gray' style='left:535px;top:803.5px;'>Shinken</div><div class='cell' style='left:685px;top:796.0px'>Mongodb-open-conne<br>ctions</div><div class='t' style='left:985px;top:807px;font-size:12.5px;color:#333;letter-spacing:-2px'>★★★</div><div class='cell ' style='left:1126px;top:803.5px;'>All</div><div class='cell' style='left:1255px;top:796.0px'><div style='position:relative;height:17px'><span style='letter-spacing:-0.1px'>CRITICAL - General MongoDB Error: [Errno 111] Connec</span></div><div style='position:relative;height:17px'>tion refused</div></div><div class='row' style='top:835px;height:45px;background:#d9e8f2'><div class='c01'></div><div class='vl' style='left:0'></div><div class='vl' style='left:40px'></div><div class='vd' style='left:70px'></div><div class='vd' style='left:190px'></div><div class='vd' style='left:310px'></div><div class='vd' style='left:441px'></div><div class='vd' style='left:591px'></div><div class='vd' style='left:741px'></div><div class='vd' style='left:891px'></div><div class='vd' style='left:1031px'></div><div class='vd' style='left:1161px'></div><div class='vd' style='left:1491px'></div></div><svg class='abs' style='left:115px;top:850px' width='14' height='13'><path d='M1.5 7 L5 10.5 L12.5 2.5' fill='none' stroke='#aaa' stroke-width='2.2'/></svg><svg class='abs' style='left:289px;top:840px' width='30' height='30'><circle cx='15' cy='14.8' r='11.8' fill='#e64545' stroke='#000' stroke-width='2.7'/><path d='M9.4 9.2 L20.8 20.6 M20.8 9.2 L9.4 20.6' fill='none' stroke='#fff' stroke-width='4'/><path d='M9.4 9.2 L20.8 20.6 M20.8 9.2 L9.4 20.6' fill='none' stroke='#000' stroke-width='2.3'/></svg><div class='cell ' style='left:404px;top:848.5px;'>Check</div><div class='cell gray' style='left:535px;top:848.5px;'>Shinken</div><div class='cell' style='left:685px;top:841.0px'>Mongodb-queries-stat<br>delete</div><div class='t' style='left:985px;top:852px;font-size:12.5px;color:#333;letter-spacing:-2px'>★★★</div><div class='cell ' style='left:1126px;top:848.5px;'>All</div><div class='cell' style='left:1255px;top:841.0px'><div style='position:relative;height:17px'><span style='letter-spacing:-0.1px'>CRITICAL - General MongoDB Error: [Errno 111] Connec</span></div><div style='position:relative;height:17px'>tion refused</div></div></div><div class='abs' style='left:65px;top:865px;width:1811px;height:16px;background:#f1f1f1'></div><div class='abs' style='left:82px;top:867px;width:858px;height:13px;background:#c1c1c1'></div><svg class='abs' style='left:69px;top:868px' width='8' height='10'><path d='M6 1v8l-4-4z' fill='#a3a3a3'/></svg><svg class='abs' style='left:1863px;top:868px' width='8' height='10'><path d='M2 1v8l4-4z' fill='#505050'/></svg><div class='abs' style='left:67px;top:884.5px;width:36px;height:24px;border:1px solid #e2ded7;border-radius:4px;background:#f0eeea'></div><svg class='abs' style='left:67px;top:885px' width='36' height='23'><path d='M12.9 6v12' stroke='#bdbdbd' stroke-width='2.2'/><path d='M24 7v10l-8.5-5z' fill='#bdbdbd'/></svg><div class='abs' style='left:108px;top:884.5px;width:34px;height:24px;border:1px solid #e2ded7;border-radius:4px;background:#f0eeea'></div><svg class='abs' style='left:108px;top:885px' width='34' height='23'><path d='M22.3 7.4v9.4l-8.8-4.7z' fill='#bdbdbd'/></svg><div class='abs' style='left:223px;top:884.5px;width:34px;height:24px;border:1px solid #e2ded7;border-radius:4px;background:#f0eeea'></div><svg class='abs' style='left:223px;top:885px' width='34' height='23'><path d='M13.6 7.4v9.4l8.8-4.7z' fill='#bdbdbd'/></svg><div class='abs' style='left:262px;top:884.5px;width:32px;height:24px;border:1px solid #e2ded7;border-radius:4px;background:#f0eeea'></div><svg class='abs' style='left:262px;top:885px' width='32' height='23'><path d='M11.4 7v10l8.9-5z' fill='#bdbdbd'/><path d='M23.2 6v12' stroke='#bdbdbd' stroke-width='2.2'/></svg><div class='abs' style='left:157px;top:884px;width:39px;height:24px;background:#fff;border:1px solid #ccc;border-radius:3px'></div><div class='abs' style='left:190px;top:885px;width:5px;height:22px;background:#f0f0f0'></div><div class='t' style='left:164px;top:890px;font-size:14px;color:#222'>1</div><svg class='abs' style='left:178px;top:891px' width='8' height='7'><path d='M0 0h7l-3.5 6z' fill='#111'/></svg><div class='t' style='left:198px;top:892px;font-size:12px;color:#555'>/1</div><div class='abs' style='left:313px;top:884px;width:55px;height:24px;background:#fff;border:1px solid #ccc;border-radius:3px'></div><div class='abs' style='left:362px;top:885px;width:5px;height:22px;background:#f0f0f0'></div><div class='t' style='left:320px;top:890px;font-size:14px;color:#222'>100</div><svg class='abs' style='left:350px;top:891px' width='8' height='7'><path d='M0 0h7l-3.5 6z' fill='#111'/></svg><div class='t' style='left:371px;top:891px;font-size:12px;color:#555'>lignes/page</div><div class='t' style='left:1703px;top:891px;font-size:12px;color:#555;letter-spacing:-0.1px'>1 - 86 sur 86 Clusters/Hôtes/Checks</div><div class='abs' style='left:0;top:915px;width:60px;height:2px;background:#c9c9c9'></div><div class='abs' style='left:60px;top:915px;width:1860px;height:1px;background:#1e1e1e'></div><div class='abs' style='left:60px;top:916px;width:1860px;height:1px;background:#f2f2f2'></div><div class='abs' style='left:1886px;top:117px;width:9px;height:798px;background:linear-gradient(to right,rgba(0,0,0,0),rgba(0,0,0,0.22))'></div></body></html>
